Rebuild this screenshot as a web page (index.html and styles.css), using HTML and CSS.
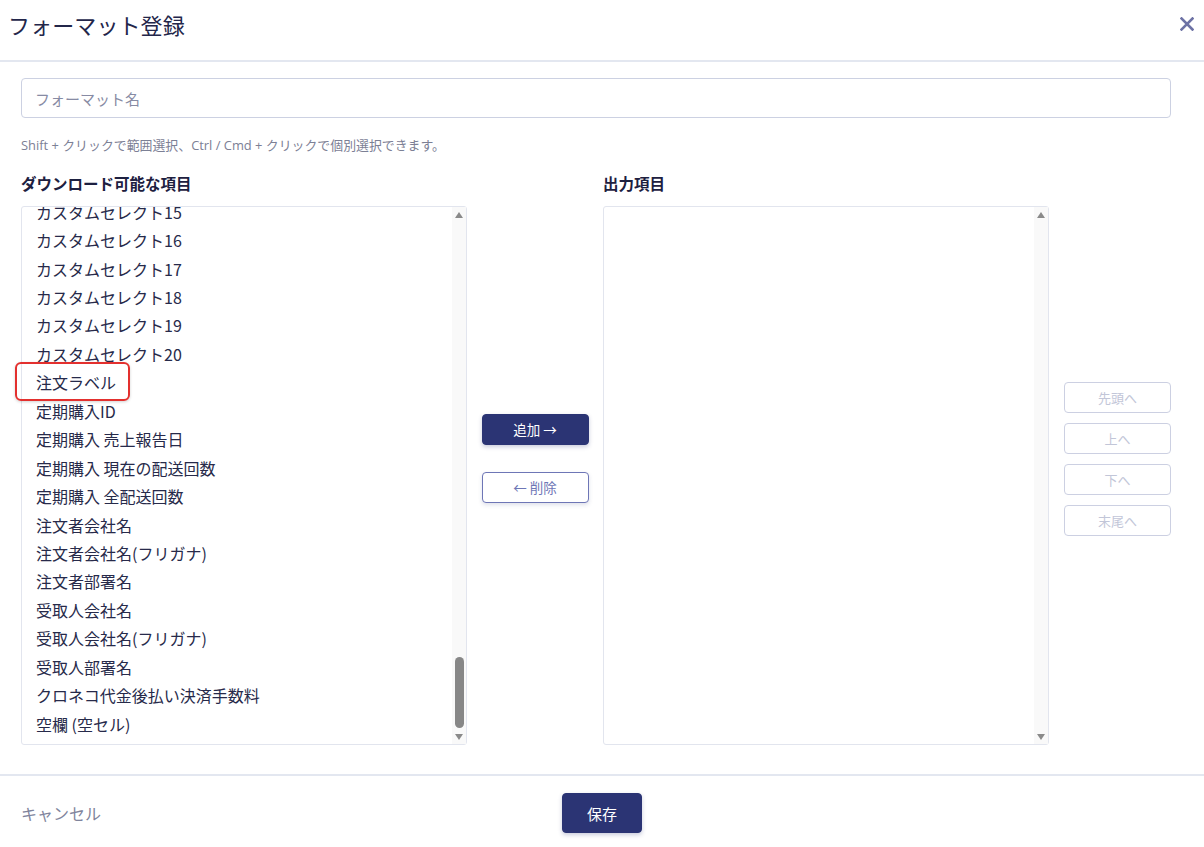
FILE: index.html
```html
<!DOCTYPE html>
<html lang="ja">
<head>
<meta charset="utf-8">
<title>フォーマット登録</title>
<link rel="stylesheet" href="styles.css">
</head>
<body>
<div class="modal">
  <header class="modal-header">
    <h1 class="modal-title">フォーマット登録</h1>
    <button class="close-btn" aria-label="閉じる">
      <svg width="14" height="14" viewBox="0 0 14 14"><path d="M1.5 1.5 L12.5 12.5 M12.5 1.5 L1.5 12.5" stroke="#6d72a5" stroke-width="2.6" stroke-linecap="square"/></svg>
    </button>
  </header>

  <main class="modal-body">
    <input class="name-input" type="text" placeholder="フォーマット名">
    <p class="hint">Shift + クリックで範囲選択、Ctrl / Cmd + クリックで個別選択できます。</p>

    <div class="picker">
      <section class="column">
        <h2 class="column-label">ダウンロード可能な項目</h2>
        <div class="listbox">
          <ul class="items">
            <li>カスタムセレクト15</li>
            <li>カスタムセレクト16</li>
            <li>カスタムセレクト17</li>
            <li>カスタムセレクト18</li>
            <li>カスタムセレクト19</li>
            <li>カスタムセレクト20</li>
            <li><span class="marked">注文ラベル</span></li>
            <li>定期購入ID</li>
            <li>定期購入 売上報告日</li>
            <li>定期購入 現在の配送回数</li>
            <li>定期購入 全配送回数</li>
            <li>注文者会社名</li>
            <li>注文者会社名(フリガナ)</li>
            <li>注文者部署名</li>
            <li>受取人会社名</li>
            <li>受取人会社名(フリガナ)</li>
            <li>受取人部署名</li>
            <li>クロネコ代金後払い決済手数料</li>
            <li>空欄 (空セル)</li>
          </ul>
          <div class="scrollbar">
            <span class="arrow up"></span>
            <div class="track"><span class="thumb"></span></div>
            <span class="arrow down"></span>
          </div>
        </div>
      </section>

      <div class="transfer">
        <button class="btn btn-primary btn-small">追加 →</button>
        <button class="btn btn-outline btn-small">← 削除</button>
      </div>

      <section class="column">
        <h2 class="column-label">出力項目</h2>
        <div class="listbox">
          <ul class="items"></ul>
          <div class="scrollbar">
            <span class="arrow up"></span>
            <div class="track"></div>
            <span class="arrow down"></span>
          </div>
        </div>
      </section>

      <div class="order">
        <button class="btn btn-disabled btn-small">先頭へ</button>
        <button class="btn btn-disabled btn-small">上へ</button>
        <button class="btn btn-disabled btn-small">下へ</button>
        <button class="btn btn-disabled btn-small">末尾へ</button>
      </div>
    </div>
  </main>

  <footer class="modal-footer">
    <a class="cancel" href="#">キャンセル</a>
    <button class="btn btn-primary btn-save">保存</button>
    <span></span>
  </footer>
</div>
</body>
</html>
```

FILE: styles.css
```css
* { box-sizing: border-box; }

html, body {
  margin: 0;
  padding: 0;
  background: #ffffff;
}

body {
  font-family: "Open Sans", "Noto Sans CJK JP", sans-serif;
  color: #272a4a;
}

.modal {
  width: 1204px;
  height: 847px;
  display: flex;
  flex-direction: column;
}

/* header */
.modal-header {
  height: 62px;
  border-bottom: 2px solid #e3e7f0;
  display: flex;
  align-items: center;
  justify-content: space-between;
  padding: 0 10px 12px 8px;
}

.modal-title {
  margin: 0;
  font-family: "Noto Sans CJK JP", sans-serif;
  font-size: 22px;
  font-weight: 400;
  line-height: 30px;
  color: #23264a;
  letter-spacing: 0.1px;
}

.close-btn {
  border: 0;
  background: none;
  padding: 0;
  width: 14px;
  height: 14px;
  display: flex;
  cursor: pointer;
}

/* body */
.modal-body {
  padding: 16px 33px 0 21px;
  flex: 1;
}

.name-input {
  display: block;
  width: 100%;
  height: 40px;
  border: 1px solid #ccd1e2;
  border-radius: 4px;
  padding: 0 13px;
  font-family: "Noto Sans CJK JP", sans-serif;
  font-size: 15px;
  color: #272a4a;
  outline: none;
}

.name-input::placeholder {
  color: #878ba4;
}

.hint {
  margin: 18px 0 0;
  font-size: 12.9px;
  line-height: 18px;
  color: #7c8095;
}

.picker {
  margin-top: 18px;
  display: grid;
  grid-template-columns: 446px 136px 446px 1fr;
  align-items: center;
}

.column-label {
  margin: 0 0 12px;
  font-family: "Noto Sans CJK JP", sans-serif;
  font-size: 15.5px;
  font-weight: 700;
  line-height: 22px;
  color: #1d2040;
}

.listbox {
  height: 539px;
  border: 1px solid #e2e5ee;
  border-radius: 3px;
  display: flex;
}

/* list is scrolled to its end: the overflow sits above and is clipped there,
   while the annotation frame may reach past the sides */
.items {
  list-style: none;
  margin: 0;
  padding: 0 0 6px 14px;
  flex: 1;
  display: flex;
  flex-direction: column;
  justify-content: flex-end;
  clip-path: inset(0 -40px 0 -40px);
}

.items li {
  flex: none;
  height: 28.45px;
  line-height: 28.45px;
  font-family: "Noto Sans CJK JP", sans-serif;
  font-size: 16px;
  color: #272a4a;
  white-space: nowrap;
}

.marked {
  position: relative;
}

/* red annotation frame around an item */
.marked::after {
  content: "";
  position: absolute;
  left: -21px;
  right: -14px;
  top: -8px;
  bottom: -7px;
  border: 2px solid #e3302e;
  border-radius: 6px;
  box-shadow: 0 1px 3px rgba(0, 0, 0, 0.18);
}

.scrollbar {
  width: 14px;
  flex: none;
  background: #f9f9f9;
  display: flex;
  flex-direction: column;
  align-items: center;
  padding: 5px 0 4px;
}

.arrow {
  width: 0;
  height: 0;
  border-left: 4.5px solid transparent;
  border-right: 4.5px solid transparent;
}

.arrow.up { border-bottom: 6px solid #8a8a8a; }
.arrow.down { border-top: 6px solid #8a8a8a; }

.track {
  flex: 1;
  width: 100%;
  display: flex;
  flex-direction: column;
  justify-content: flex-end;
  align-items: center;
  padding: 0 0 6px 1px;
}

.thumb {
  width: 9px;
  height: 71px;
  border-radius: 5px;
  background: #878787;
}

/* buttons */
.btn {
  font-family: "Noto Sans CJK JP", sans-serif;
  border-radius: 4px;
  cursor: pointer;
  padding: 0;
}

.btn-small {
  width: 107px;
  height: 31px;
  font-size: 13.5px;
  line-height: 1;
}

.btn-primary {
  background: #2b3474;
  border: 1px solid #2b3474;
  color: #ffffff;
  box-shadow: 0 2px 4px rgba(43, 52, 116, 0.25);
}

.btn-outline {
  background: #ffffff;
  border: 1px solid #6e76b6;
  color: #6e76b6;
  box-shadow: 0 2px 4px rgba(43, 52, 116, 0.15);
}

.btn-disabled {
  background: #ffffff;
  border: 1px solid #ccd0e2;
  color: #c2c6d8;
  font-size: 13px;
}

.transfer {
  display: flex;
  flex-direction: column;
  align-items: center;
  gap: 27px;
}

.order {
  display: flex;
  flex-direction: column;
  align-items: flex-end;
  gap: 10px;
}

/* footer */
.modal-footer {
  height: 73px;
  border-top: 2px solid #e3e7f0;
  margin-top: 28px;
  display: grid;
  grid-template-columns: 1fr auto 1fr;
  align-items: center;
  padding: 3px 21px 0;
}

.cancel {
  font-family: "Noto Sans CJK JP", sans-serif;
  font-size: 16px;
  color: #80849c;
  text-decoration: none;
  justify-self: start;
}

.btn-save {
  width: 80px;
  height: 40px;
  font-size: 15px;
}
```
